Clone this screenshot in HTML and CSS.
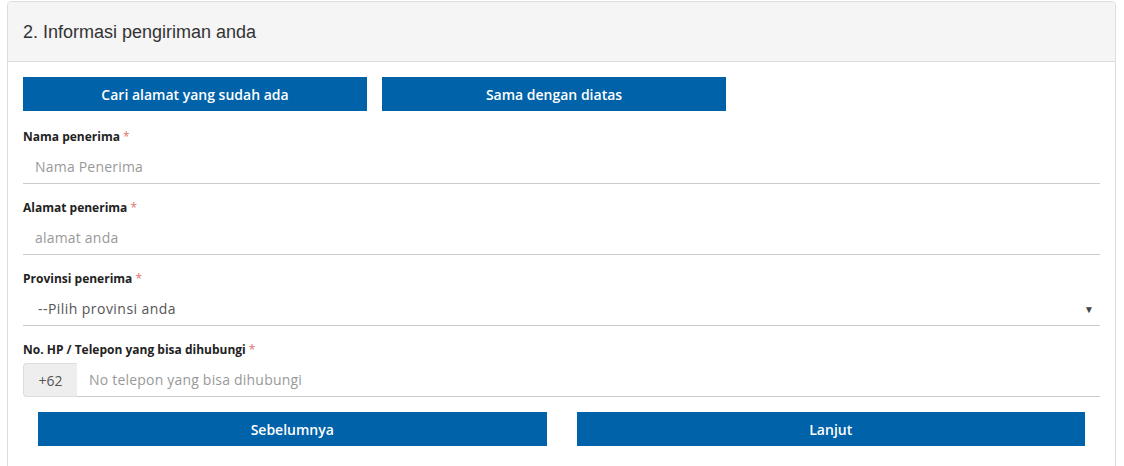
FILE: index.html
```html
<!DOCTYPE html>
<html lang="id">
<head>
<meta charset="utf-8">
<title>Informasi pengiriman</title>
<link rel="stylesheet" href="styles.css">
</head>
<body>
<div class="panel">
  <div class="panel-heading">2. Informasi pengiriman anda</div>
  <div class="panel-body">
    <div class="top-actions">
      <button class="btn">Cari alamat yang sudah ada</button>
      <button class="btn">Sama dengan diatas</button>
    </div>
    <div class="form-group">
      <label class="label">Nama penerima <span class="req">*</span></label>
      <div class="field"><span class="placeholder">Nama Penerima</span></div>
    </div>
    <div class="form-group">
      <label class="label">Alamat penerima <span class="req">*</span></label>
      <div class="field"><span class="placeholder">alamat anda</span></div>
    </div>
    <div class="form-group">
      <label class="label">Provinsi penerima <span class="req">*</span></label>
      <div class="field select"><span class="value">--Pilih provinsi anda</span><span class="caret">&#9660;</span></div>
    </div>
    <div class="form-group">
      <label class="label">No. HP / Telepon yang bisa dihubungi <span class="req">*</span></label>
      <div class="input-group">
        <span class="addon">+62</span>
        <div class="field grow"><span class="placeholder">No telepon yang bisa dihubungi</span></div>
      </div>
    </div>
    <div class="bottom-actions">
      <div class="col"><button class="btn full">Sebelumnya</button></div>
      <div class="col"><button class="btn full">Lanjut</button></div>
    </div>
  </div>
</div>
</body>
</html>
```

FILE: styles.css
```css
* { box-sizing: border-box; }
html, body { margin: 0; padding: 0; background: #fff; }
body {
  font-family: "Open Sans", "Noto Sans", sans-serif;
  color: #333;
  height: 466px;
  overflow: hidden;
}
.panel {
  margin: 1px 8px 0 7px;
  border: 1px solid #ddd;
  border-radius: 4px;
  height: 480px;
  background: #fff;
}
.panel-heading {
  background: #f5f5f5;
  border-bottom: 1px solid #ddd;
  border-radius: 3px 3px 0 0;
  height: 60px;
  padding: 19px 15px 0 15px;
  font-family: "Liberation Sans", Arial, sans-serif;
  font-size: 18px;
  line-height: 22px;
  color: #333;
}
.panel-body {
  padding: 15px 15px 0 15px;
}
.top-actions {
  display: flex;
  gap: 15px;
  margin-bottom: 17px;
}
.btn {
  display: block;
  width: 344px;
  height: 34px;
  border: none;
  border-radius: 0;
  background: #0062a9;
  color: #fff;
  font-family: "Open Sans", "Noto Sans", sans-serif;
  font-size: 14px;
  font-weight: 600;
  padding: 0;
  cursor: pointer;
}
.btn.full { width: 100%; }
.form-group { margin-bottom: 15px; }
.label {
  display: block;
  font-size: 12px;
  font-weight: 700;
  line-height: 17px;
  margin-bottom: 5px;
  color: #222;
}
.req { color: #e0736f; font-weight: 400; }
.field {
  height: 34px;
  border-bottom: 1px solid #ccc;
  padding: 0 12px;
  display: flex;
  align-items: center;
  font-size: 14px;
}
.placeholder { color: #999; letter-spacing: 0.2px; }
.select { padding-left: 15px; justify-content: space-between; padding-right: 6px; }
.select .value { color: #555; letter-spacing: 0.45px; }
.caret { font-size: 10px; color: #444; }
.input-group { display: flex; }
.addon {
  width: 54px;
  height: 34px;
  background: #eee;
  border: 1px solid #ddd;
  border-right: none;
  border-radius: 4px 0 0 4px;
  color: #555;
  font-size: 14px;
  display: flex;
  align-items: center;
  justify-content: center;
}
.grow { flex: 1; }
.bottom-actions {
  display: flex;
  margin: 0 -15px;
}
.col { flex: 1; }
.bottom-actions .col:first-child { padding: 0 15px 0 30px; }
.bottom-actions .col:last-child { padding: 0 30px 0 15px; }
```
